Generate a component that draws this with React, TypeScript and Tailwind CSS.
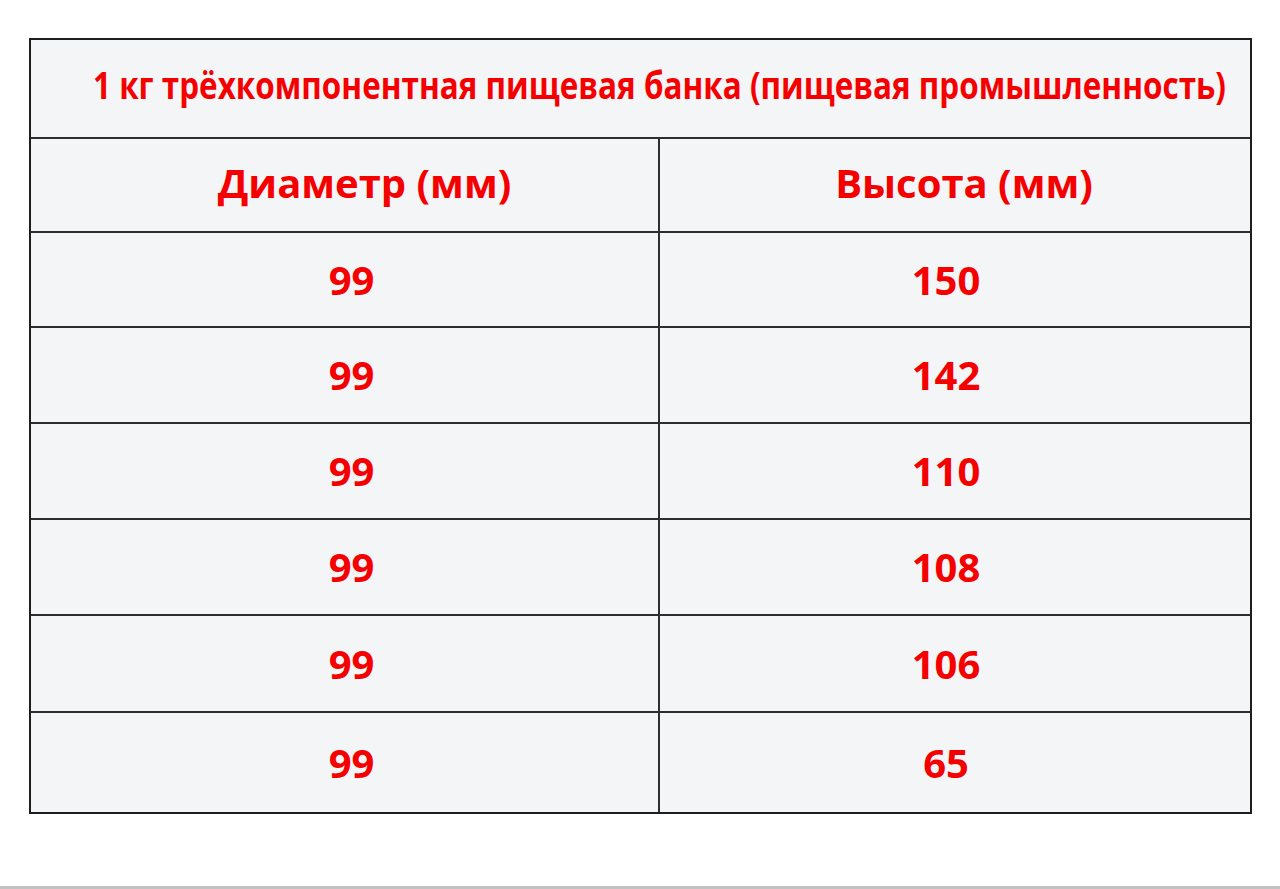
const rows: [string, string][] = [
  ['99', '150'],
  ['99', '142'],
  ['99', '110'],
  ['99', '108'],
  ['99', '106'],
  ['99', '65'],
];

const rowHeights = ['h-[95px]', 'h-[96px]', 'h-[96px]', 'h-[96px]', 'h-[97px]', 'h-[99px]'];

export default function App() {
  return (
    <div
      className="h-[889px] w-full bg-white border-b-[3px] border-[#c2c2c2] pt-[38px] pl-[29px]"
      style={{ fontFamily: '"Open Sans", "Noto Sans", sans-serif' }}
    >
      <div className="w-[1223px] border-2 border-[#1e1e1e] bg-[#f4f5f7] text-[#f50000] font-bold">
        <div className="h-[99px] flex items-center justify-center pl-[38px] pb-[8px] border-b-2 border-[#2e2e2e] overflow-hidden">
          <span className="inline-block whitespace-nowrap text-[37px] scale-x-[0.85]">
            1 кг трёхкомпонентная пищевая банка (пищевая промышленность)
          </span>
        </div>
        <div className="grid grid-cols-[629px_1fr] h-[94px] border-b-2 border-[#2e2e2e] text-[40px]">
          <div className="flex items-center justify-center pl-[40px] pb-[4px] border-r-2 border-[#2e2e2e]">Диаметр (мм)</div>
          <div className="flex items-center justify-center pl-[18px] pb-[4px]">Высота (мм)</div>
        </div>
        {rows.map(([d, h], i) => (
          <div
            key={i}
            className={`grid grid-cols-[629px_1fr] ${rowHeights[i]} text-[40px] ${i < rows.length - 1 ? 'border-b-2 border-[#2e2e2e]' : ''}`}
          >
            <div className="flex items-center justify-center pl-[14px] border-r-2 border-[#2e2e2e]">{d}</div>
            <div className="flex items-center justify-center pr-[18px]">{h}</div>
          </div>
        ))}
      </div>
    </div>
  );
}
